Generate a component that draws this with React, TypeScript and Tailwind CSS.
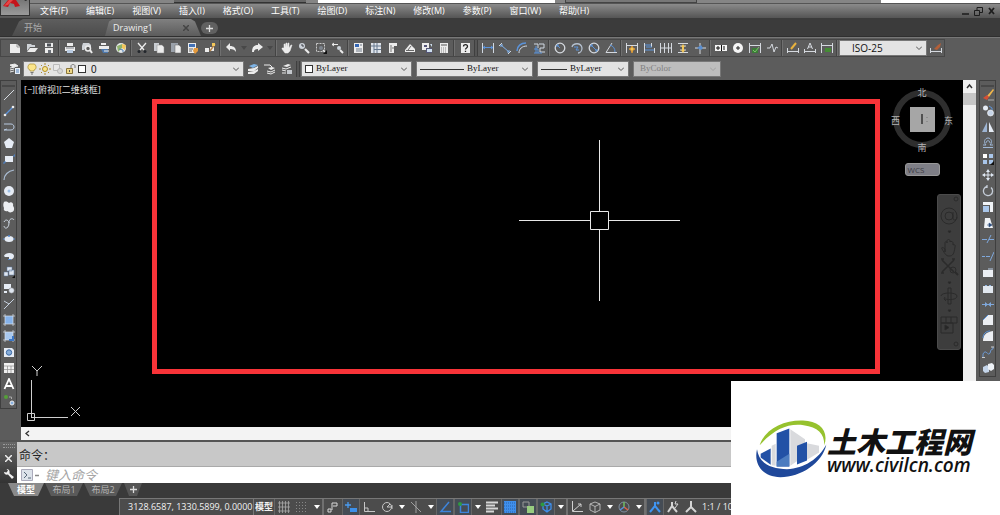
import { useState } from "react";
import type { ReactNode } from "react";

import clsx from "clsx";

const W = "#ececec";
const D = "#3c3f44";
const Y = "#f2c65a";

// Every glyph is drawn on a 12x12 grid
const icons: Record<string, ReactNode> = {
  new: <><path d="M1 2h7l3 3v6H1z" fill={W} /><path d="M8 2v3h3" fill="none" stroke="#999" /></>,
  open: <><path d="M1 2h4l1 1h3v2H4L1 9z" fill="#cfd3d8" /><path d="M4 6h8L9 10H1z" fill={W} /></>,
  save: <><path d="M2 1h8v4H2zM2 6h8v5H2z" fill={W} /><path d="M4 1.5h4v3H4z" fill="#50545a" /><path d="M5 8h3v3H5z" fill="#6b7078" /></>,
  print: <><path d="M3 1h6v3H3zM1 5h10v4H1z" fill={W} /><path d="M3 8h6v3H3z" fill="#b9cbe2" /><path d="M2 6h8" stroke="#7a7f86" /></>,
  preview: <><path d="M2 1h6l2 2v3L6 4 3 8H1V4z" fill="#cfd3d8" /><circle cx="7" cy="6.5" r="2.5" fill="none" stroke={W} strokeWidth="1.5" /><path d="M9 8l2 3" stroke={W} strokeWidth="2" /></>,
  publish: <><path d="M3 1h5v2H3zM1 4h10v3H1z" fill={W} /><path d="M3 7h7v4H5z" fill="#4d78ad" /><path d="M6 9h5" stroke={W} /></>,
  globe: <><circle cx="6" cy="6" r="5" fill="#e4e8ea" /><path d="M2 4l5-2v4l-4 4z" fill="#8fb36b" /><path d="M7 2l4 1-1 5-3-2z" fill={Y} /><path d="M4 7l4 1v2" stroke="#5583bb" fill="none" /></>,
  cut: <><path d="M2 1l6 7M10 1L4 8" stroke={W} strokeWidth="1.3" /><circle cx="3" cy="9.5" r="1.5" fill="#23272c" /><circle cx="9" cy="9.5" r="1.5" fill="#23272c" /></>,
  copy: <><path d="M1 1h5v8H1z" fill="#c9cdd2" /><path d="M4 3h5l2 2v6H4z" fill={W} stroke="#888" strokeWidth=".5" /></>,
  paste: <><path d="M1 1h7v2H5v7H1z" fill="#9aa1aa" /><path d="M5 3h4l2 2v6H5z" fill={W} stroke="#666" strokeWidth=".5" /></>,
  match: <><path d="M1 1h8v10H1z" fill={W} /><path d="M2 2h6v3H2z" fill="#4372b7" /><path d="M2 7h4M2 9h3" stroke="#666" /><path d="M7 6h4v3L8 12 6 9z" fill="#e59a3c" /></>,
  blockEdit: <><path d="M1 6h4v4H1zM6 5h4v4H6z" fill={W} /><path d="M6 9l5-7" stroke="#b6854a" strokeWidth="1.5" /><path d="M8 1h3v3H8z" fill={Y} /></>,
  undo: <path d="M1 5l4-4v3c4 0 6 2 6 6-1-2-3-3-6-3v2z" fill={W} />,
  redo: <path d="M12 5L7 1v2C3 3 1 5 1 10h2c0-2 1-3 4-3v2z" fill={W} />,
  hand: <path d="M3 6V2h1v3l1-4h1v4l1-4h1v5l2-3h1L9 9l-2 2H4L1 7V6z" fill={W} stroke={W} strokeWidth=".5" />,
  zoomRt: <><circle cx="4" cy="4" r="3" fill="#ccd2d9" /><path d="M4 2v2h2" stroke={D} fill="none" /><path d="M7 7l4 4" stroke={W} strokeWidth="2.2" /></>,
  zoomWin: <><path d="M1.5 1.5h8v8h-8z" fill="none" stroke="#c8c8c8" strokeDasharray="2 1" /><circle cx="6" cy="6" r="2" fill="#7e858e" /><path d="M8 8l2 2" stroke={W} strokeWidth="1.5" /><path d="M12 8v4H8z" fill="#111" /></>,
  zoomPrev: <><path d="M0 2.5h6M0 2.5l2-1.5M0 2.500l2 1.5" stroke={W} fill="none" /><circle cx="7" cy="6" r="2" fill="#ccd2d9" /><path d="M8 8l3 3" stroke={W} strokeWidth="2" /></>,
  props: <><path d="M1 1h9v10H1z" fill={W} /><path d="M2 2h4v3H2z" fill="#3567b5" /><path d="M7 3h2M3 7h6M3 9h6" stroke="#707b88" /></>,
  center: <><path d="M1 1h10v10H1z" fill="#dfe4ea" /><path d="M4 1v10M1 4h10M7 1v10M4 7.5h7" stroke="#66798f" /></>,
  palettes: <><path d="M2 1h8v3H7v7H2z" fill={W} /><path d="M4 3v7M5 6h2" stroke="#777" /></>,
  sheets: <><path d="M1 8l5-6 5 5v3H1z" fill={W} /><path d="M4 8l3-4M2 8.5h8" stroke="#666" /></>,
  markup: <><path d="M1 1h7v7H1z" fill={W} /><path d="M3 3h3v2H3zM5 6h6v5H5z" fill="#557" /><path d="M6 7h5v3H6zM9 2h2v3" fill="#cfe0f0" /></>,
  calc: <><path d="M2 1h8v10H2z" fill={W} /><path d="M3 3h6" stroke="#555" /><path d="M3 6h6M3 8h6M3 10h6" stroke="#888" strokeDasharray="1 1" /></>,
  help: <><path d="M2 1h9v10H2z" fill={W} /><path d="M4.5 4.5C4.5 2 8.5 2 8.5 4.5 8.5 6 6.5 6 6.5 7.5M6.5 8.8v1.2" fill="none" stroke="#222" strokeWidth="1.3" /></>,
  dimLinear: <><path d="M.5 1v10M11.5 1v10" stroke="#d0d8e2" /><path d="M1 5.5h10M3 4L1 5.5 3 7M9 4l2 1.5L9 7" stroke="#5b93da" fill="none" /></>,
  dimAligned: <><path d="M0 4l3-3M9 12l3-3" stroke="#d0d8e2" /><path d="M2 3l8 7M2 5V3h2M8 10h2V8" stroke="#7fb0ea" fill="none" /></>,
  dimArc: <><path d="M3 11C3 7 6 4 11 4" stroke="#d0d8e2" fill="none" /><path d="M1 9c0-5 4-8 9-8" stroke="#5b93da" strokeWidth="1.5" fill="none" /></>,
  ordinate: <><path d="M1 2h4v4M6 2h5v4H7v4h5" stroke="#d0d8e2" fill="none" /><path d="M1 7h4v4M1 11h8M3 4v7" stroke="#5b93da" fill="none" /></>,
  radius: <><circle cx="6" cy="6" r="4.8" fill="none" stroke="#d5d9df" strokeWidth="1.3" /><path d="M6 6L3 3M3 5V3h2" stroke="#5b93da" fill="none" /></>,
  jogged: <><path d="M1 5c1-4 9-5 10 1 0 3-2 5-4 5" stroke="#b4c0cf" strokeWidth="1.3" fill="none" /><path d="M3 5h4L5 8h3" stroke="#5b93da" fill="none" /></>,
  diameter: <><circle cx="6" cy="6" r="4.8" fill="none" stroke="#d5d9df" strokeWidth="1.3" /><path d="M3 3l6 6M3 5V3h2M9 7v2H7" stroke="#5b93da" fill="none" /></>,
  angular: <><path d="M7 1L1 10.5h11" stroke="#d5d9df" fill="none" /><path d="M5 3c3 1 5 3 5 7" stroke="#5b93da" fill="none" /></>,
  quickDim: <><path d="M.5 1v10M11.5 1v10M1 3.5h10" stroke="#d5d9df" /><path d="M6 4l1 2 2 1-2 1-1 3-1-3-2-1 2-1z" fill={Y} stroke="#e49a30" strokeWidth=".8" /></>,
  baseline: <><path d="M1.5 1v10M11.5 6v5M8.5 1v4" stroke="#d5d9df" /><path d="M2 3h6M2 8h9M3 5h6" stroke="#5b93da" /></>,
  continue: <path d="M.5 1v10M4.5 1v10M8.5 1v10M11.5 1v10M1 6h10" stroke="#d5d9df" />,
  dimSpace: <><path d="M1 1.5h10M1 10.5h10M3 4h6M3 8h6" stroke="#d5d9df" /><path d="M6 2l2 3H7v3h1l-2 3-2-3h1V5H4z" fill={Y} /></>,
  dimBreak: <><path d="M6 1v3M6 7v5M1 6h3M8 6h4" stroke="#d5d9df" /><path d="M3 6l4-3 2 3-2 2z" fill="#5b8fd0" /></>,
  tolerance: <><path d="M0 3h12v6H0z" fill="#f5f5f5" /><path d="M6.5 3v6M9 4v4M1 6h4M3 4v4" stroke="#111" /></>,
  centerMark: <><circle cx="6" cy="6" r="5" fill="#f5f5f5" /><path d="M6 4v4M4 6h4" stroke="#222" /></>,
  inspect: <><path d="M.5 1v10M11.5 1v10M1 3.5h10" stroke="#d5d9df" /><path d="M3 6h6v5H3z" fill="#3b7d36" /><path d="M4 8l2 2 4-5" stroke="#7bc46c" fill="none" /></>,
  jogLine: <path d="M1 6h3l2-4 2 8 2-5 2 1" stroke="#d5d9df" fill="none" />,
  dimEdit: <><path d="M.5 6v5M11.5 6v5M1 9.5h10" stroke="#d5d9df" /><path d="M4 7l5-6" stroke="#e8b23e" strokeWidth="2" /></>,
  dimText: <><path d="M.5 7v4M11.5 7v4M1 9.5h10M3.500 7L6 1l2.5 6M4 5h4" stroke="#d5d9df" fill="none" /></>,
  dimUpdate: <><path d="M.5 1v10M11.5 1v10M1 3.5h10" stroke="#d5d9df" /><path d="M4 6h6v4H4z" fill="#448b34" /></>,
  dimStyle: <><path d="M.5 6v5M11.5 6v5M1 9.5h10" stroke="#d5d9df" /><path d="M4 7l4-4 3-2-1 4-3 3z" fill="#b35f38" /></>,
  layers: <><path d="M1 2l5-1 3 2-5 1zM1 5l5-1M1 7l4-1M1 9l4-1" stroke={W} fill={W} /><path d="M6 5h5v6H6z" fill="#e6edf5" /><path d="M7 7h3M7 9h3" stroke="#5380b7" /></>,
  layerCur: <><path d="M1 9l6-1 4-2v2l-4 3H1zM1 6l6-1 4-2v2L7 8H1z" fill={W} /><path d="M2 3l5-2 4 1-5 3z" fill="#7fb4e6" /></>,
  layerPrev: <><path d="M4 5l4-1 3 1-4 2z" fill={W} /><path d="M3 8l4 1 4-2M3 10l4 1 4-2" stroke={W} fill="none" /><path d="M0 2h6l2 2" stroke={W} fill="none" /></>,
  layerState: <><path d="M2 3l5-2 3 1-4 2z" fill={W} /><path d="M1 5l4 1 5-2M1 7l4 1M1 10h4" stroke={W} fill="none" /><path d="M6 7h5v4H6z" fill="#c3c7cc" /></>,
  bulb: <><path d="M6 1a3 3 0 0 1 2 6v1H4V7a3 3 0 0 1 2-6z" fill="#fbe58a" stroke="#a88c33" strokeWidth=".7" /><path d="M4.5 9.5h3M5 11h2" stroke="#777" /></>,
  sun: <><circle cx="6" cy="6" r="2.5" fill="#fbe58a" stroke="#b08f2b" /><path d="M6 0v2M6 10v2M0 6h2M10 6h2M2 2l1 1M9 9l1 1M2 10l1-1M9 3l1-1" stroke="#a98a30" /></>,
  viewport: <><path d="M1.5 1.5h6v6h-6z" fill="#e8e8e8" stroke="#bbb" /><circle cx="8" cy="8" r="2.5" fill="#d8d8d8" stroke="#b5b5b5" /></>,
  lock: <><path d="M1.5 5.5h6v5h-6z" fill="#eed889" stroke="#8a753a" /><path d="M6 5V3c0-2 4-2 4 0v2" stroke="#777" fill="none" /><path d="M4.5 7v2" stroke="#555" /></>,

  line: <path d="M1 11L11 1" stroke="#d5dae0" />,
  xline: <><path d="M2 10l8-8" stroke="#5e95dc" strokeWidth="1.3" /><circle cx="2" cy="10" r="1.3" fill={W} /><circle cx="10" cy="2" r="1.3" fill={W} /></>,
  pline: <path d="M1 3h7c4 0 4 6 0 6H1M1 9l3-1" stroke="#b7c9e0" fill="none" />,
  polygon: <path d="M6 1l5 4-2 6H3L1 5z" fill="#e6ecf5" />,
  rect: <><path d="M2 3h8v6H2z" fill="#e6ecf5" /><path d="M0 10h2V8M10 3h2V1" stroke="#4f86cf" fill="none" /></>,
  arc: <path d="M1 11C1 6 5 2 11 1" stroke="#a9bbd1" strokeWidth="1.2" fill="none" />,
  circle: <><circle cx="6" cy="6" r="5" fill="#e6ecf5" /><circle cx="6" cy="6" r="1.5" fill="#9dc0e6" /></>,
  cloud: <path d="M1 1c2-1 4 0 5 1 2-2 5 0 4 3 2 2 1 6-1 6-2 1-4 0-4-1-3 1-5-1-4-3-1-2-1-4 0-6z" fill="#eceef2" />,
  spline: <path d="M1 9c1 4 5 2 5-3s4-5 5-3M1 5c2-4 5-1 5 1" stroke="#ccd5e0" fill="none" />,
  ellipse: <><path d="M0 6h12" stroke="#4f86cf" /><ellipse cx="6" cy="6" rx="4.5" ry="3" fill="#e6ecf5" /><path d="M6 4V2" stroke="#4f86cf" strokeWidth="1.5" /></>,
  ellipseArc: <><path d="M1 6c1-4 10-4 10 0 0 3-3 4-5 3V7H2z" fill="#e6ecf5" /><path d="M5 9.500h3" stroke="#4f86cf" /></>,
  insert: <><path d="M4 1h5v4H4zM6 4h5v5H6zM1 6h4v4H1z" fill="#dfe6f0" stroke="#5c7ba3" strokeWidth=".5" /><path d="M12 9v3H9z" fill="#111" /></>,
  block: <><path d="M1 2h7v5H1zM1 9h3v2H1z" fill="#e6ecf5" /><circle cx="8.5" cy="8.5" r="2.7" fill="#dfe6f0" stroke="#777" strokeWidth=".5" /></>,
  point: <path d="M1 3l5 3 5-5M6 6l-5 5" stroke="#c6d0de" fill="none" />,
  hatch: <><path d="M2 2h8v8H2z" fill="#85b2ea" /><path d="M0 2h12M0 10h12M2 0v12M10 0v12" stroke="#d8e0ea" strokeWidth=".7" /></>,
  gradient: <><path d="M2 2h8v8H2z" fill="#a8c8ee" /><path d="M0 2h12M0 10h12M2 0v12M10 0v12" stroke="#d8e0ea" strokeWidth=".7" /><path d="M10 6v4H6" stroke="#3c76c4" strokeWidth="2" fill="none" /></>,
  region: <><path d="M1 2h8l2 2v7H1z" fill="#e6ecf5" /><circle cx="6" cy="6.5" r="2.7" fill="#87add9" stroke="#3a69a5" /></>,
  table: <><path d="M1 1h10v10H1z" fill="#f0f0f0" /><path d="M1 4h10M1 7.5h10M4.5 4v7M8 4v7" stroke="#8d8d8d" strokeWidth=".7" /></>,
  mtext: <path d="M1.500 11L6 1l4.5 10M3 8h6" stroke="#fff" strokeWidth="1.8" fill="none" />,
  addSel: <><circle cx="3" cy="3" r="2" fill="#54a038" /><path d="M6 3h2.500v2" stroke="#aaa" fill="none" /><circle cx="9" cy="9" r="2" fill="#89b3e3" stroke="#eee" /></>,

  erase: <><path d="M5 7l6-7 1 1-5 7z" fill="#f0b64a" /><path d="M1 9l4-3 2 2-2 3z" fill="#d44f35" /><path d="M6 11h6" stroke="#aaa" /></>,
  copyObj: <><circle cx="3.5" cy="3" r="2.5" fill="#e6ecf5" /><circle cx="8.5" cy="8" r="3" fill="#c7d5e8" stroke="#fff" strokeWidth=".6" /><path d="M7 1l3 2v2" stroke="#5b93da" fill="none" /></>,
  mirror: <><path d="M5 1v10H0z" fill="#9db4d2" /><path d="M7 1v10h5z" fill="#e6ecf5" /></>,
  offset: <path d="M1 10.5h10M1 8h3c-3-3-1-7 2-7s5 4 2 7h3M4 6c0-3 4-3 4 0" stroke="#9fb8d8" fill="none" />,
  array: <><path d="M1 1h4v4H1z" fill="#fff" /><path d="M7 1h4v4H7zM1 7h4v4H1zM7 7h4v4H7z" fill="#a9c6ea" /><path d="M12 8v4H8z" fill="#111" /></>,
  move: <path d="M6 0l2 3H6.500v2.5H9V4l3 2-3 2V6.500H6.500V9H8l-2 3-2-3h1.5V6.500H3V8L0 6l3-2v1.5h2.5V3H4z" fill="#dfe8f4" />,
  rotate: <path d="M9 2.500A4.6 4.6 0 1 1 5 1.500M5 0v3" stroke="#c5cdd8" strokeWidth="1.3" fill="none" />,
  scale: <><path d="M1 1h10v10H8V4H1z" fill="#f0f3f7" /><path d="M1 5h6v6H1z" fill="#a9c6ea" /></>,
  stretch: <><path d="M3 1h5l3 10H2z" fill="#f0f3f7" /><path d="M5 8h2V6l3 2-3 2V8" stroke="#2a4a7a" fill="#2a4a7a" strokeWidth=".6" /></>,
  trim: <path d="M0 6.5h5M7 6.5h5M5 10l4-8" stroke="#7fa8dc" />,
  extend: <path d="M0 6.5h3M4 6.5h4M8 11l4-9" stroke="#7fa8dc" />,
  breakPt: <><path d="M1 4h10v7H1z" fill="#eceff4" /><path d="M6 3h5" stroke="#b9cbe2" /></>,
  breakObj: <><path d="M1 4h10v7H1z" fill="#e2e8f0" /><path d="M3 3.500h2M7 3.500h2" stroke="#8fb4e2" /></>,
  join: <><path d="M0 6.5h12" stroke="#7fa8dc" /><path d="M3 4l3 2.5L3 9zM9 4L6 6.500 9 9z" fill="#7fa8dc" /></>,
  chamfer: <><path d="M1 6l5-5h5v10H1z" fill="#eceef2" /><path d="M1 6l5-5" stroke="#5b93da" /></>,
  fillet: <><path d="M1 11c0-6 3-9 10-10v10z" fill="#eceef2" /><path d="M1 8c0-4 3-7 7-7" stroke="#5b93da" fill="none" /></>,
  blend: <><path d="M1 11V8c3-6 5 3 7-1 1-3 1-4 3-4V1" stroke="#6c99d2" fill="none" /><path d="M0 11.500h3M9 1h3" stroke="#ccc" /></>,
  explode: <><path d="M1 5l4-2 2 2v5l-4 1-2-2z" fill="#c4d5ea" /><path d="M6 2l4-1 2 2v4l-3 2-3-2z" fill="#eef2f7" /></>,

  grid: <path d="M1.5 0v12M4.5 0v12M7.5 0v12M10.5 0v12M0 2h12M0 6h12M0 10h12" stroke="#a9a9a9" strokeWidth=".8" />,
  snap: <path d="M0 1.5h12M0 4.5h12M0 7.5h12M0 10.5h12" stroke="#888" strokeDasharray="1 2" />,
  infer: <path d="M5 9V2h5v3H6M1 8h3v3H1z" stroke="#d8d8d8" fill="none" />,
  dyn: <><path d="M3 1v6M0 4h6" stroke="#4a9cf0" strokeWidth="1.3" /><path d="M5 7h7v4H5z" fill="#3d90ea" /></>,
  ortho: <path d="M1.5 1v9.5H12M1.500 7H5v3" stroke="#c6c6c6" fill="none" />,
  polar: <><circle cx="6" cy="6" r="4.5" stroke="#c6c6c6" fill="none" /><path d="M6 6h5M6 6l3-3M11 4v4" stroke="#c6c6c6" /></>,
  iso: <path d="M1 1l10 10M6 0v12" stroke="#a9a9a9" strokeWidth=".9" />,
  otrack: <path d="M10 1L2 10.5h10" stroke="#3d84dc" strokeWidth="1.5" fill="none" />,
  osnap: <><path d="M3.5 3.5h8v8h-8z" stroke="#3d84dc" strokeWidth="1.5" fill="none" /><circle cx="3" cy="3" r="2" fill="#2e9a3f" /></>,
  lweight: <path d="M0 1.5h12M0 4.5h9M0 7.5h12M0 10.5h8" stroke="#d6d6d6" strokeWidth="2" />,
  transp: <><path d="M0 0h12v12H0z" fill="#3f8fec" /><path d="M0 2h12M0 5h12M0 8h12M0 11h12" stroke="#2a62a9" strokeDasharray="1 1" /></>,
  cycle: <><path d="M1 1h6v5H1z" fill="none" stroke="#999" /><path d="M5 5h7v7H5z" fill="#98cc80" /></>,
  osnap3d: <><path d="M7 1l4 2v5l-4 3-4-3V3zM3 3l4 2 4-2M7 5v6" stroke="#3f8fec" strokeWidth="1.3" fill="none" /><circle cx="2.5" cy="3.5" r="2" fill="#2e9a3f" /></>,
  ducs: <path d="M1.5 0v10.5H12M2 10l8-7M7 3h3v3" stroke="#cfcfcf" fill="none" />,
  filter: <path d="M6 1l5 2v6l-5 2.5L1 9V3zM1 3l5 2.5L11 3M6 5.5v6" stroke="#c0c0c0" strokeWidth=".9" fill="none" />,
  gizmo: <><circle cx="6" cy="6" r="5" stroke="#7f8ea0" fill="none" /><path d="M6 1v6" stroke="#71bd62" strokeWidth="1.5" /><path d="M6 6l4 3" stroke="#dd6248" strokeWidth="1.5" /><path d="M6 6L2 9" stroke="#5590dd" strokeWidth="1.5" /></>,
  annoVis: <><path d="M6 1v4L1 11M6 5l5 6" stroke="#3f95f2" strokeWidth="2" fill="none" /><circle cx="9" cy="2" r="1.5" fill="#3f95f2" /></>,
  annoAuto: <><path d="M5 1v4L1 11M5 5l5 6" stroke="#d4d4d4" strokeWidth="2" fill="none" /><path d="M9 0l-1 3h3l-3 4" stroke="#d4d4d4" fill="none" /></>,
  annoScale: <path d="M6 0v6L1 11M6 6l5 5" stroke="#d4d4d4" strokeWidth="2" fill="none" />,
};

const Icon = ({ name }: { name: string }) => (
  <svg viewBox="0 0 12 12" className="size-3 shrink-0" aria-hidden="true">
    {icons[name]}
  </svg>
);

const ToolButton = ({ name, className }: { name: string; className?: string }) => (
  <button
    type="button"
    aria-label={name}
    className={clsx("flex shrink-0 items-center justify-center hover:bg-white/10", className ?? "h-4 w-[17px]")}
  >
    <Icon name={name} />
  </button>
);

const Drop = ({ className }: { className: string }) => (
  <button type="button" aria-label="more" className={clsx("flex shrink-0 items-center justify-center", className)}>
    <svg viewBox="0 0 6 4" className="h-1 w-1.5">
      <path d="M0 0h6L3 4z" fill="currentColor" />
    </svg>
  </button>
);

const Separator = () => <span className="mx-px h-4 w-0.5 shrink-0 border-l border-[#444] bg-[#707070]" />;

const Grip = () => <span className="mx-px h-4 w-1 shrink-0 border-x border-[#3f3f3f] bg-[#555]" />;

type ComboProps = {
  label: string;
  options: string[];
  className?: string;
  selectClassName?: string;
  disabled?: boolean;
  children?: ReactNode;
};

const Combo = ({ label, options, className, selectClassName, disabled, children }: ComboProps) => (
  <label
    className={clsx(
      "relative flex h-4 shrink-0 items-center border border-[#777]",
      disabled ? "bg-[#bdbdbd] text-[#808080]" : "bg-[#e3e3e3] text-[#111]",
      className
    )}
  >
    {children}
    <select
      aria-label={label}
      disabled={disabled}
      className={clsx("h-full min-w-0 flex-1 appearance-none bg-transparent outline-none", selectClassName)}
    >
      {options.map((option) => (
        <option key={option}>{option}</option>
      ))}
    </select>
    <svg viewBox="0 0 6 4" className="pointer-events-none absolute right-1 h-1 w-1.5">
      <path d="M0 .5l3 3 3-3" fill="none" stroke={disabled ? "#a0a0a0" : "#555"} />
    </svg>
  </label>
);

const menus = [
  "文件(F)", "编辑(E)", "视图(V)", "插入(I)", "格式(O)", "工具(T)",
  "绘图(D)", "标注(N)", "修改(M)", "参数(P)", "窗口(W)", "帮助(H)",
];

const standardTools = [
  "new", "open", "save", "|", "print", "preview", "publish", "globe", "|",
  "cut", "copy", "paste", "match", "blockEdit", "|", "undo", "v", "redo", "v", "|",
  "hand", "zoomRt", "zoomWin", "zoomPrev", "|",
  "props", "center", "palettes", "sheets", "markup", "calc", "|", "help", "#",
  "dimLinear", "dimAligned", "dimArc", "ordinate", "|",
  "radius", "jogged", "diameter", "angular", "|",
  "quickDim", "baseline", "continue", "dimSpace", "dimBreak", "|",
  "tolerance", "centerMark", "inspect", "jogLine", "|", "dimEdit", "dimText", "dimUpdate", "|",
];

const drawTools = [
  "line", "xline", "pline", "polygon", "rect", "arc", "circle", "cloud", "spline", "ellipse",
  "ellipseArc", "insert", "block", "point", "hatch", "gradient", "region", "table", "mtext", "addSel",
];

const modifyTools = [
  "erase", "copyObj", "mirror", "offset", "array", "move", "rotate", "scale", "stretch",
  "trim", "extend", "breakPt", "breakObj", "join", "chamfer", "fillet", "blend", "explode",
];

const statusTools = [
  "grid", "snap", "v", "|", "infer", "dyn", "ortho", "polar", "v", "iso", "v",
  "otrack", "osnap", "v", "lweight", "transp", "cycle", "osnap3d", "v", "|",
  "ducs", "filter", "v", "gizmo", "v", "|", "annoVis", "annoAuto", "annoScale",
];

const activeStatus = ["dyn", "otrack", "osnap", "transp", "cycle", "osnap3d", "annoVis"];

const TitleBar = () => (
  <header className="relative shrink-0">
    <div className="flex h-[3px] bg-[#858585]">
      <span className="w-[174px]" />
      <span className="w-[132px] border-b border-[#333] bg-[#666]" />
      <span className="w-3" />
      <span className="w-[237px] bg-white" />
      <span className="w-[10px]" />
      <span className="w-[132px] border border-t-0 border-[#444] bg-[#777]" />
      <span className="w-[184px]" />
      <span className="flex-1 bg-white" />
    </div>
    <div className="flex h-[15px] items-center border-t border-[#555] bg-linear-to-b from-[#8b8b8b] to-[#555] pr-1 pl-10">
      <nav className="flex gap-[18px] text-[9px] leading-3 whitespace-nowrap text-white">
        {menus.map((menu) => (
          <button key={menu} type="button">
            {menu}
          </button>
        ))}
      </nav>
      <div className="ml-auto flex gap-1 text-[#1d1d1d]">
        <button type="button" aria-label="minimize">
          <svg viewBox="0 0 9 9" className="size-[9px]"><path d="M1 7h7" stroke="currentColor" strokeWidth="1.5" /></svg>
        </button>
        <button type="button" aria-label="restore">
          <svg viewBox="0 0 9 9" className="size-[9px]"><path d="M.5 3.5h5v5h-5zM3 3V.5h5.5v5H6" stroke="currentColor" fill="none" /></svg>
        </button>
        <button type="button" aria-label="close">
          <svg viewBox="0 0 9 9" className="size-[9px]"><path d="M2 1l5 6M7 1L2 7" stroke="currentColor" strokeWidth="1.8" /></svg>
        </button>
      </div>
    </div>
    <button
      type="button"
      aria-label="application menu"
      className="absolute top-0 left-0 h-4 w-[30px] border border-t-0 border-[#333] bg-linear-to-b from-[#777] to-[#9a9a9a]"
    >
      <svg viewBox="0 0 28 15" className="h-[15px] w-7">
        <path d="M7 0h8l4 6-5 1-1-3-4-1-2 4-5-1z" fill="#c5141b" />
        <path d="M8 0h4L7 5 3 6z" fill="#e84545" />
        <path d="M23 0h3l-1 1z" fill="#222" />
      </svg>
    </button>
  </header>
);

const FileTabs = () => (
  <div className="flex h-[19px] shrink-0 items-end border-b border-[#2f2f2f] bg-[#3b3b3b] pl-3 text-[9px] leading-4 text-[#eee]">
    <button
      type="button"
      className="-mr-2 h-[17px] w-[101px] bg-linear-to-b from-[#5e5e5e] to-[#4c4c4c] pl-3 text-left text-[#aaa] [clip-path:polygon(0_100%,7px_15%,11px_0,100%_0,100%_100%)]"
    >
      开始
    </button>
    <div className="flex h-[17px] w-[96px] items-center bg-linear-to-b from-[#808080] to-[#5c5c5c] pr-3 pl-2 [clip-path:polygon(0_100%,4px_15%,8px_0,86px_0,90px_15%,100%_100%)]">
      <button type="button">Drawing1</button>
      <button type="button" aria-label="close tab" className="ml-auto">
        <svg viewBox="0 0 6 6" className="size-1.5"><path d="M0 0l6 6M6 0L0 6" stroke="#444" strokeWidth="1.5" /></svg>
      </button>
    </div>
    <button
      type="button"
      aria-label="new tab"
      className="mb-0.5 flex h-3 w-[17px] items-center justify-center rounded-md bg-[#606060]"
    >
      <svg viewBox="0 0 7 7" className="size-[7px]"><path d="M3.5 0v7M0 3.5h7" stroke="#ddd" strokeWidth="1.3" /></svg>
    </button>
  </div>
);

const Toolbars = () => (
  <div className="flex h-[43px] shrink-0 flex-col gap-1 overflow-hidden border-t border-[#777] bg-[#5c5c5c] pt-px">
    <div className="flex h-[18px] w-fit items-center border border-[#474747] pl-[5px]">
      {standardTools.map((tool, i) => {
        if (tool === "|") return <Separator key={i} />;
        if (tool === "v") return <Drop key={i} className="w-[9px] text-[#484848]" />;
        if (tool === "#") return <Grip key={i} />;
        return <ToolButton key={i} name={tool} />;
      })}
      <Combo label="标注样式" options={["ISO-25"]} className="w-[88px] pl-3 text-[10px]" />
      <ToolButton name="dimStyle" />
    </div>
    <div className="flex h-4 items-center pl-[6px] font-['Liberation_Serif',serif] text-[9px]">
      <ToolButton name="layers" />
      <Combo
        label="图层"
        options={["0"]}
        className="w-[221px] gap-px pl-0.5"
        selectClassName="pl-1 font-['Liberation_Sans',sans-serif] text-[10px]"
      >
        <Icon name="bulb" />
        <Icon name="sun" />
        <Icon name="viewport" />
        <Icon name="lock" />
        <span className="size-2 border border-[#333] bg-white" />
      </Combo>
      <ToolButton name="layerCur" />
      <ToolButton name="layerPrev" />
      <ToolButton name="layerState" />
      <Grip />
      <Combo label="颜色" options={["ByLayer"]} className="w-[111px] gap-[3px] pl-[3px]">
        <span className="size-2 border border-[#333] bg-white" />
      </Combo>
      <Combo label="线型" options={["ByLayer"]} className="ml-1 w-[117px] gap-[3px] pl-[3px]">
        <span className="h-px w-11 bg-[#333]" />
      </Combo>
      <Combo label="线宽" options={["ByLayer"]} className="ml-1 w-[92px] gap-[3px] pl-[3px]">
        <span className="h-px w-[26px] bg-[#333]" />
      </Combo>
      <Combo label="打印样式" options={["ByColor"]} disabled className="ml-1 w-[88px] pl-1.5" />
    </div>
  </div>
);

const Palette = ({ tools, className }: { tools: string[]; className: string }) => (
  <div className={clsx("flex w-[17px] shrink-0 flex-col justify-between border border-[#3f3f3f] pt-1", className)}>
    <span className="mx-px h-0.5 shrink-0 bg-[#484848]" />
    {tools.map((tool) => (
      <ToolButton key={tool} name={tool} className="h-4 w-full" />
    ))}
  </div>
);

const ViewCube = () => (
  <div className="absolute top-2 right-[10px] flex w-[62px] flex-col items-center gap-[13px]">
    <div className="relative grid size-[62px] place-items-center">
      <span className="absolute inset-0.5 rounded-full border-[6px] border-[#2e2e2e]" />
      <div className="absolute inset-x-0 -top-px -bottom-1 flex flex-col items-center justify-between text-[9px] leading-3 text-[#b5b5b5]">
        <span>北</span>
        <div className="flex w-full justify-between">
          <span>西</span>
          <span>东</span>
        </div>
        <span>南</span>
      </div>
      <svg viewBox="0 0 25 25" className="relative size-[25px]">
        <path d="M0 0h25v25H0z" fill="#a6a6a6" />
        <path d="M12 7v10" stroke="#333" strokeWidth="1.5" />
        <path d="M17 10v8" stroke="#777" strokeDasharray="1 3" />
      </svg>
    </div>
    <button
      type="button"
      className="h-[13px] w-[35px] rounded-[3px] border border-[#999] bg-[#7e7e86] pl-0.5 text-left text-[8px] leading-[10px] text-[#3c3c44]"
    >
      WCS
    </button>
  </div>
);

const NavBar = () => (
  <div className="absolute top-[114px] right-0.5 h-[156px] w-6 rounded-[3px] border border-[#4b4b4b] bg-[#3d3d3d]">
    <svg viewBox="0 0 22 154" className="h-[154px] w-[22px]" fill="none" stroke="#2b2b2b">
      <circle cx="18" cy="4" r="2" />
      <circle cx="11" cy="21" r="8" />
      <circle cx="11" cy="21" r="4" />
      <path d="M15 17v7c1 2 4 1 4-2" />
      <path d="M10 36h3l-1.5 2z" fill="#252525" />
      <path d="M7 57V48c0-2 2-2 2 0v-2c0-2 3-2 3 0v1c0-1 3-1 3 1v2c1-1 3 0 2 2-1 7-2 9-6 9-3 0-4-2-7-7-1-2 1-2 3 0z" />
      <path d="M4 65l12 12M16 65L4 77M3 64h3M14 64h3M3 78h3" strokeWidth="1.5" />
      <circle cx="15" cy="75" r="3" />
      <path d="M17 77l3 3" strokeWidth="2" />
      <path d="M10 87h3l-1.5 2z" fill="#252525" />
      <path d="M10 93h3v16h-3zM3 101c0-4 16-4 16 0s-8 4-12 3M7 102l-1 2 2 2" />
      <path d="M10 115h3l-1.5 2z" fill="#252525" />
      <path d="M3 122h16v6H3zM3 128h12v10H3zM8 122v6M13 122v6" />
      <path d="M7 130v5l4-2.5z" fill="#252525" />
      <circle cx="18" cy="149" r="2" />
    </svg>
  </div>
);

const Canvas = () => (
  <div className="relative min-w-0 flex-1 overflow-hidden bg-black">
    <p className="absolute top-1 left-[3px] text-[9px] leading-3 text-[#e2e2e2]">[−][俯视][二维线框]</p>
    <div className="absolute top-[19px] right-[83px] bottom-[53px] left-[131px] border-5 border-[#f83338]" />
    <svg viewBox="0 0 161 161" className="absolute top-[60px] left-[498px] size-[161px]" stroke="#e8e8e8" fill="none">
      <path d="M80.5 0v71M80.5 90v71M0 80.5h71M90 80.5h71M71.5 71.5h18v18h-18z" />
    </svg>
    <svg viewBox="0 0 56 58" className="absolute bottom-1 left-1.5 h-[58px] w-14" stroke="#cfcfcf" fill="none">
      <path d="M.5 48.5h7v7h-7zM4.5 15v37M4 52.5h37" />
      <path d="M5 1l5 5L15 1M10 6v5M44 42l9 9M53 42l-9 9" />
    </svg>
    <ViewCube />
    <NavBar />
  </div>
);

const CommandLine = () => {
  const [command, setCommand] = useState("");

  return (
    <div className="flex h-[43px] shrink-0 border-t-2 border-[#555] bg-[#c8c8c8]">
      <div className="flex w-[17px] flex-col items-center justify-between bg-linear-to-b from-[#666] to-[#333] pt-0.5 pb-1 text-[#eee]">
        <span className="h-1 w-3 border-y border-dotted border-[#999]" />
        <button type="button" aria-label="close command line">
          <svg viewBox="0 0 7 7" className="size-[7px]"><path d="M0 0l7 7M7 0L0 7" stroke="currentColor" strokeWidth="1.5" /></svg>
        </button>
        <button type="button" aria-label="customize">
          <svg viewBox="0 0 10 10" className="size-2.5">
            <path d="M2.500 0L4 1.500 2.500 3.500 0 3c0 2 2 3 4 2.500L8 10l2-2-4.500-3.500C6 2 5 0 2.500 0z" fill="currentColor" />
          </svg>
        </button>
      </div>
      <div className="flex flex-1 flex-col">
        <p className="h-6 pt-1 pl-0.5 text-[12px] leading-5 text-[#222]">命令：</p>
        <label className="flex h-[17px] items-center border-t border-[#aaa] bg-white pl-1">
          <svg viewBox="0 0 20 12" className="h-3 w-5" fill="none">
            <path d="M.5.500h11v11H.5z" fill="#dce2ea" stroke="#aab" />
            <path d="M3 3l3 3-3 3M7 9h3" stroke="#567" />
            <path d="M14 6.500h4" stroke="#888" strokeWidth="1.500" />
          </svg>
          <input
            aria-label="命令"
            value={command}
            onChange={(e) => setCommand(e.target.value)}
            placeholder="键入命令"
            className="h-full flex-1 bg-transparent pl-1 text-[13px] text-black italic outline-none placeholder:text-[#a5a5a5]"
          />
        </label>
      </div>
    </div>
  );
};

const LayoutTabs = () => (
  <div className="flex h-[15px] shrink-0 items-start bg-[#3a3a3a] pl-2 text-[9px] leading-[14px] text-[#b5b5b5]">
    {["模型", "布局1", "布局2"].map((tab, i) => (
      <button
        key={tab}
        type="button"
        className={clsx(
          "h-[13px] [clip-path:polygon(0_0,100%_0,calc(100%-6px)_100%,6px_100%)]",
          i === 0 ? "w-9 bg-[#8a8a8a] font-bold text-white" : "ml-px w-[38px] bg-[#5a5a5a]"
        )}
      >
        {tab}
      </button>
    ))}
    <button
      type="button"
      aria-label="new layout"
      className="ml-0.5 flex h-[13px] w-[18px] items-center justify-center bg-[#555] [clip-path:polygon(0_0,100%_0,calc(100%-5px)_100%,5px_100%)]"
    >
      <svg viewBox="0 0 7 7" className="size-[7px]"><path d="M3.5 0v7M0 3.5h7" stroke="#ddd" strokeWidth="1.3" /></svg>
    </button>
  </div>
);

const StatusBar = () => (
  <footer className="flex h-[17px] shrink-0 bg-[#3a3a3a]">
    <div className="ml-[119px] flex flex-1 items-center border-t border-l border-[#777] bg-[#4c4c4c] text-[9px] leading-4 text-[#f2f2f2]">
      <span className="w-[134px] shrink-0 border-r border-[#777] pl-2 whitespace-nowrap">
        3128.6587, 1330.5899, 0.0000
      </span>
      <button type="button" className="w-[21px] shrink-0 border-r border-[#666] font-bold">
        模型
      </button>
      {statusTools.map((tool, i) => {
        if (tool === "|") return <span key={i} className="h-4 w-0.5 shrink-0 bg-[#707070]" />;
        if (tool === "v") return <Drop key={i} className="w-[11px] text-white" />;
        return (
          <ToolButton
            key={i}
            name={tool}
            className={clsx("h-4 w-[18px]", activeStatus.includes(tool) && "border-x border-[#666] bg-[#454c55]")}
          />
        );
      })}
      <button type="button" className="ml-0.5 whitespace-nowrap">
        1:1 / 100%
      </button>
    </div>
  </footer>
);

const Brand = () => (
  <a
    href="#civilcn"
    className="absolute right-0 bottom-0 flex h-[134px] w-[269px] items-center bg-white pl-6 text-[#111]"
  >
    <svg viewBox="90 128 216 176" className="h-[59px] w-[72px] shrink-0" aria-hidden="true">
      <path d="M196 158l44 30v50l-44 30z" fill="#d9dadd" />
      <path d="M246 200l36 8v20l-36 22z" fill="#d9dadd" />
      <path d="M140 208l12-6v66l-12-2z" fill="#d9dadd" />
      <path d="M155 170l38-14v114h-38z" fill="#2251a6" />
      <path d="M155 256l38-24v38h-38z" fill="#4c7cc0" />
      <path d="M107 232l30-16v49l-30-22z" fill="#2251a6" />
      <path d="M216 208l30-12v56l-30 12z" fill="#2251a6" />
      <path d="M104 206c16-50 74-76 130-74 50 2 78 30 64 74 0-36-20-54-62-60-48-6-88 12-132 60z" fill="#96c22e" />
      <path d="M96 218c-10 44 14 82 70 84 62 0 126-42 138-98-22 42-66 72-118 74-46 0-84-16-90-60z" fill="#1f489a" />
    </svg>
    <span className="flex flex-col pt-1.5 whitespace-nowrap italic">
      <span className="text-[29px] leading-7 font-black">土木工程网</span>
      <span className="font-['Open_Sans',sans-serif] text-[19px] leading-[18px] font-semibold">www.civilcn.com</span>
    </span>
  </a>
);

export default function App() {
  return (
    <div className="relative flex h-screen flex-col overflow-hidden bg-[#5c5c5c] font-['Open_Sans','Noto_Sans_CJK_SC',sans-serif]">
      <TitleBar />
      <FileTabs />
      <Toolbars />
      <main className="flex min-h-0 flex-1">
        <div className="w-[21px] shrink-0">
          <Palette tools={drawTools} className="h-[329px]" />
        </div>
        <div className="flex min-w-0 flex-1 flex-col">
          <div className="flex min-h-0 flex-1">
            <Canvas />
            <div className="w-[13px] shrink-0 bg-[#f0f0f0]">
              <svg viewBox="0 0 13 13" className="size-[13px]"><path d="M4 8l2.5-3L9 8" fill="none" stroke="#333" strokeWidth="1.5" /></svg>
              <div className="h-3 bg-[#c6c6c6]" />
            </div>
          </div>
          <div className="h-[13px] shrink-0 bg-[#f3f3f3]">
            <svg viewBox="0 0 13 13" className="size-[13px]"><path d="M8 4L5 6.500 8 9" fill="none" stroke="#333" strokeWidth="1.3" /></svg>
          </div>
        </div>
        <div className="w-6 shrink-0 pl-[3px]">
          <Palette tools={modifyTools} className="h-[297px]" />
        </div>
      </main>
      <CommandLine />
      <LayoutTabs />
      <StatusBar />
      <Brand />
    </div>
  );
}
